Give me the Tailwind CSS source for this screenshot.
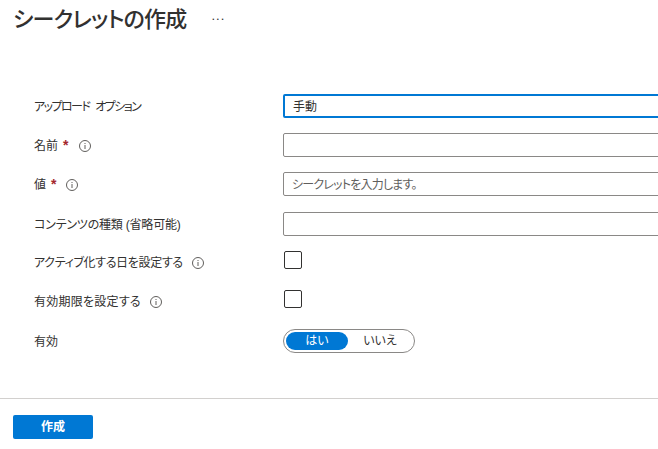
<!DOCTYPE html>
<html lang="ja">
<head>
  <meta charset="UTF-8" />
  <title>シークレットの作成</title>
  <script src="https://cdn.jsdelivr.net/npm/@tailwindcss/browser@4"></script>
</head>
<body class="bg-white overflow-hidden font-['Liberation_Sans','Noto_Sans_CJK_JP',sans-serif] text-[#323130] [font-feature-settings:'palt']">
<div class="w-[658px] h-[449px] overflow-hidden flex flex-col">

  <!-- Header -->
  <div class="h-[94px] shrink-0 pl-[13px] pt-[6px] flex items-start">
    <h1 class="text-[22px] leading-[28px] font-medium tracking-[-0.8px] whitespace-nowrap">シークレットの作成</h1>
    <span class="ml-[25px] mt-[0px] text-[13px] leading-[20px] tracking-[1px]">...</span>
  </div>

  <!-- Form -->
  <div class="pl-[34px] text-[12px] h-[304px] shrink-0">
    <div class="flex items-center h-[24px]">
      <label class="w-[249px] shrink-0 pt-[1px] tracking-[-1.55px] [word-spacing:4px]">アップロード オプション</label>
      <div class="w-[400px] shrink-0 h-[24px] border-2 border-[#0078d4] rounded-[2px] pl-[8px] pt-[1px] flex items-center">手動</div>
    </div>

    <div class="flex items-center h-[24px] mt-[15px]">
      <label class="w-[249px] shrink-0 flex items-center pt-[1px]">名前<span class="text-[#a4262c] text-[14px] font-bold ml-[5px]">*</span>
        <svg class="ml-[11px]" width="12" height="12" viewBox="0 0 12 12" fill="none" stroke="#605e5c"><circle cx="6" cy="6" r="5.5"/><path d="M6 5v4M6 3v1"/></svg>
      </label>
      <input class="w-[400px] shrink-0 h-[24px] border border-[#8a8886] rounded-[2px] px-[8px]" />
    </div>

    <div class="flex items-center h-[24px] mt-[15px]">
      <label class="w-[249px] shrink-0 flex items-center pt-[1px]">値<span class="text-[#a4262c] text-[14px] font-bold ml-[5px]">*</span>
        <svg class="ml-[10px]" width="12" height="12" viewBox="0 0 12 12" fill="none" stroke="#605e5c"><circle cx="6" cy="6" r="5.5"/><path d="M6 5v4M6 3v1"/></svg>
      </label>
      <input class="w-[400px] shrink-0 h-[24px] border border-[#8a8886] rounded-[2px] pl-[8px] pr-[8px] pt-[2px] tracking-[-0.8px] placeholder:text-[#605e5c]" placeholder="シークレットを入力します。" />
    </div>

    <div class="flex items-center h-[24px] mt-[16px]">
      <label class="w-[249px] shrink-0 pt-[1px] tracking-[-0.2px]">コンテンツの種類 (省略可能)</label>
      <input class="w-[400px] shrink-0 h-[24px] border border-[#8a8886] rounded-[2px] px-[8px]" />
    </div>

    <div class="flex items-center h-[24px] mt-[12px]">
      <label class="w-[250px] shrink-0 flex items-center pt-[6px] tracking-[-0.35px]">アクティブ化する日を設定する
        <svg class="ml-[9px]" width="12" height="12" viewBox="0 0 12 12" fill="none" stroke="#605e5c"><circle cx="6" cy="6" r="5.5"/><path d="M6 5v4M6 3v1"/></svg>
      </label>
      <div class="w-[18px] h-[18px] border border-[#323130] rounded-[2px]"></div>
    </div>

    <div class="flex items-center h-[24px] mt-[15px]">
      <label class="w-[250px] shrink-0 flex items-center pt-[6px] tracking-[0.25px]">有効期限を設定する
        <svg class="ml-[9px]" width="12" height="12" viewBox="0 0 12 12" fill="none" stroke="#605e5c"><circle cx="6" cy="6" r="5.5"/><path d="M6 5v4M6 3v1"/></svg>
      </label>
      <div class="w-[18px] h-[18px] border border-[#323130] rounded-[2px]"></div>
    </div>

    <div class="flex items-center h-[24px] mt-[18px]">
      <label class="w-[249px] shrink-0 pt-[1px]">有効</label>
      <div class="w-[132px] h-[24px] border border-[#8a8886] rounded-full flex items-center px-[2px]">
        <div class="w-[62px] h-[18px] rounded-full bg-[#0078d4] text-white flex items-center justify-center">はい</div>
        <div class="flex-1 flex items-center justify-center">いいえ</div>
      </div>
    </div>
  </div>

  <!-- Footer -->
  <div class="border-t border-[#d2d0ce] pl-[13px] pt-[15px]">
    <button class="w-[80px] h-[24px] bg-[#0078d4] rounded-[2px] text-white text-[12px] font-semibold">作成</button>
  </div>

</div>
</body>
</html>
